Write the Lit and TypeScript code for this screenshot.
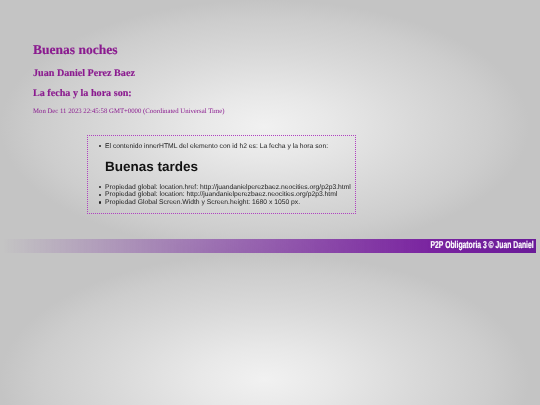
import { LitElement, html, css } from "lit";
import { customElement } from "lit/decorators.js";

@customElement("app-root")
export class AppRoot extends LitElement {
  static styles = css`
    :host {
      display: block;
      width: 540px;
      height: 405px;
      overflow: hidden;
      background-color: #c4c4c4;
      background-image: radial-gradient(closest-side at 49% 50%, #f1f1f1 0%, #e8e8e8 25%, #dadada 55%, #cdcdcd 85%, #c4c4c4 100%);
      background-size: 540px 253px;
      background-repeat: repeat;
      font-family: "Liberation Serif", serif;
      text-rendering: geometricPrecision;
    }
    .page {
      box-sizing: border-box;
      height: 405px;
      padding-top: 42px;
      filter: blur(0.3px);
    }
    .head {
      margin-left: 33px;
      color: #8a1a8f;
      font-weight: bold;
    }
    .h1, .h2, .h3 { -webkit-text-stroke: 0.15px #8a1a8f; }
    .h1 { font-size: 13.5px; line-height: 16px; }
    .h2 { font-size: 10.13px; line-height: 12px; margin-top: 10px; }
    .h3 { font-size: 10.13px; line-height: 12px; margin-top: 8px; }
    .date { font-size: 6.75px; line-height: 8px; margin-top: 8px; font-weight: normal; }
    .box {
      box-sizing: border-box;
      margin: 19px 0 0 87px;
      width: 269px;
      height: 79px;
      border: 1px dotted #b040c0;
      padding-top: 6.5px;
      font-family: "Liberation Sans", sans-serif;
      font-size: 6.75px;
      line-height: 7.67px;
      color: #222;
    }
    ul { margin: 0; padding: 0 0 0 17px; list-style: none; }
    li { position: relative; }
    li::before {
      content: "";
      position: absolute;
      left: -6px;
      top: 2.3px;
      width: 2.4px;
      height: 2.4px;
      border-radius: 50%;
      background: #222;
    }
    .big {
      margin: 8px 0 7.5px 17px;
      font-size: 13.5px;
      line-height: 18px;
      font-weight: bold;
      color: #111;
    }
    .bar {
      box-sizing: border-box;
      display: flex;
      justify-content: flex-end;
      margin: 25px 4px 0 3px;
      height: 14px;
      padding-right: 2px;
      background: linear-gradient(to right, rgba(120,40,160,0) 0%, rgba(120,40,160,.55) 40%, #7a24a0 80%, #6a1a98 100%);
    }
    .bar span {
      display: block;
      color: #fff;
      white-space: nowrap;
      font-family: "Liberation Sans", sans-serif;
      font-weight: bold;
      font-size: 10px;
      line-height: 14px;
      -webkit-text-stroke: 0.2px #fff;
      transform: scaleX(0.68);
      transform-origin: right center;
    }
  `;
  render() {
    return html`
      <div class="page">
        <div class="head">
          <div class="h1">Buenas noches</div>
          <div class="h2">Juan Daniel Perez Baez</div>
          <div class="h3">La fecha y la hora son:</div>
          <div class="date">Mon Dec 11 2023 22:45:58 GMT+0000 (Coordinated Universal Time)</div>
        </div>
        <div class="box">
          <ul><li>El contenido innerHTML del elemento con id h2 es: La fecha y la hora son:</li></ul>
          <div class="big">Buenas tardes</div>
          <ul>
            <li>Propiedad global: location.href: http://juandanielperezbaez.neocities.org/p2p3.html</li>
            <li>Propiedad global: location: http://juandanielperezbaez.neocities.org/p2p3.html</li>
            <li>Propiedad Global Screen.Width y Screen.height: 1680 x 1050 px.</li>
          </ul>
        </div>
        <div class="bar"><span>P2P Obligatoria 3 © Juan Daniel</span></div>
      </div>
    `;
  }
}
